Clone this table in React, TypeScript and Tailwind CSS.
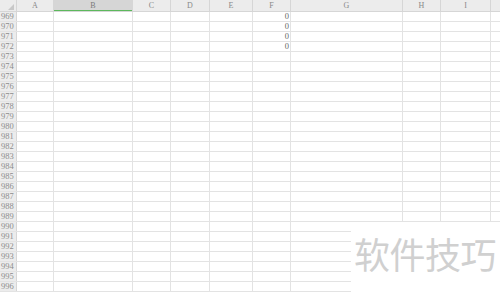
const COLS = [
  { key: 'A', w: 'w-[37px]' },
  { key: 'B', w: 'w-[79px]' },
  { key: 'C', w: 'w-[38px]' },
  { key: 'D', w: 'w-[39px]' },
  { key: 'E', w: 'w-[43px]' },
  { key: 'F', w: 'w-[38px]' },
  { key: 'G', w: 'w-[112px]' },
  { key: 'H', w: 'w-[38px]' },
  { key: 'I', w: 'w-[50px]' },
]

const ROWS = Array.from({ length: 28 }, (_, i) => 969 + i)
// F 列前四行有值
const VALUES: Record<number, string> = { 969: '0', 970: '0', 971: '0', 972: '0' }

export default function App() {
  return (
    <div className="relative w-[500px] h-[296px] overflow-hidden bg-white font-['Liberation_Serif','Noto_Sans_CJK_SC',serif]">
      {/* 列标题 */}
      <div className="flex h-[12px] bg-[#ececec] border-b border-[#d6d6d6]">
        <div className="w-[17px] shrink-0 border-r border-[#d6d6d6] flex items-end justify-end pr-[2px] pb-[1px]">
          <svg width="6" height="6" viewBox="0 0 6 6"><path d="M6 0 L6 6 L0 6 Z" fill="#c8c8c8" /></svg>
        </div>
        {COLS.map(c => (
          <div
            key={c.key}
            className={`${c.w} shrink-0 border-r border-[#d6d6d6] flex items-center justify-center text-[8px] leading-none ${
              c.key === 'B' ? 'bg-[#d6d6d6] shadow-[inset_0_-1px_0_#5cb85c] text-[#7a7a7a]' : 'text-[#8a8a8a]'
            }`}
          >
            {c.key}
          </div>
        ))}
        <div className="flex-1" />
      </div>

      {/* 行 */}
      {ROWS.map(r => (
        <div key={r} className="flex h-[10px] border-b border-[#e3e3e3]">
          <div className="w-[17px] shrink-0 bg-[#ececec] border-r border-[#d6d6d6] text-[8.5px] leading-[9px] text-[#8c8c8c] pl-[1px]">
            {r}
          </div>
          {COLS.map(c => (
            <div
              key={c.key}
              className={`${c.w} shrink-0 border-r border-[#e3e3e3] text-right pr-[1px] text-[8.5px] leading-[9px] text-[#666666]`}
            >
              {c.key === 'F' ? VALUES[r] ?? '' : ''}
            </div>
          ))}
          <div className="flex-1" />
        </div>
      ))}

      {/* 水印 */}
      <div className="absolute left-[351px] top-[222px] right-0 bottom-0 bg-white flex items-start pl-[3px] pt-[13px]">
        <span className="font-['Noto_Sans_CJK_SC',sans-serif] text-[36px] leading-none text-[#d0d0d0] tracking-[-0.5px]">
          软件技巧
        </span>
      </div>
    </div>
  )
}
